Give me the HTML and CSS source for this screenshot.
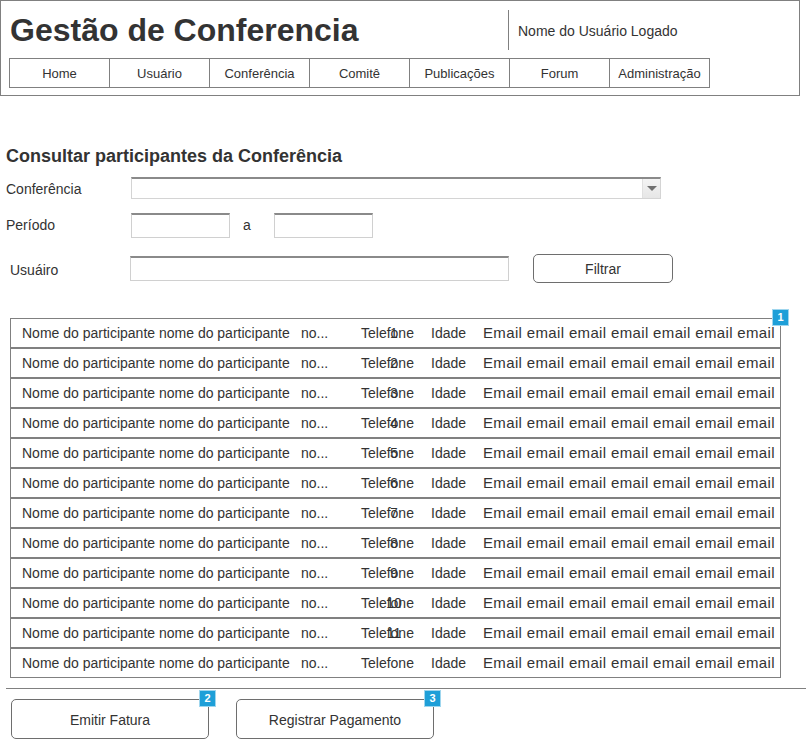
FILE: index.html
```html
<!DOCTYPE html>
<html lang="pt">
<head>
<meta charset="utf-8">
<title>Gestão de Conferencia</title>
<link rel="stylesheet" href="styles.css">
</head>
<body>
<div class="header">
  <div class="top-row">
    <div class="title">Gestão de Conferencia</div>
    <div class="user">Nome do Usuário Logado</div>
  </div>
  <div class="nav">
    <div class="nav-item">Home</div>
    <div class="nav-item">Usuário</div>
    <div class="nav-item">Conferência</div>
    <div class="nav-item">Comitê</div>
    <div class="nav-item">Publicações</div>
    <div class="nav-item">Forum</div>
    <div class="nav-item">Administração</div>
  </div>
</div>

<div class="main">
  <h1 class="heading">Consultar participantes da Conferência</h1>

  <div class="form-row row-conf">
    <div class="label label-conf">Conferência</div>
    <div class="select"><div class="select-btn"><span class="tri"></span></div></div>
  </div>

  <div class="form-row row-period">
    <div class="label label-period">Período</div>
    <div class="input short"></div>
    <div class="sep">a</div>
    <div class="input short"></div>
  </div>

  <div class="form-row row-user">
    <div class="label label-user">Usuáiro</div>
    <div class="input long"></div>
    <div class="btn filter">Filtrar</div>
  </div>

  <div class="table">
    <div class="badge badge-table">1</div>
    <div class="row"><span class="c-name">Nome do participante nome do participante</span><span class="c-more">no...</span><span class="c-phone">Telefone<span class="num">1</span></span><span class="c-age">Idade</span><span class="c-mail">Email email email email email email email</span></div>
    <div class="row"><span class="c-name">Nome do participante nome do participante</span><span class="c-more">no...</span><span class="c-phone">Telefone<span class="num">2</span></span><span class="c-age">Idade</span><span class="c-mail">Email email email email email email email</span></div>
    <div class="row"><span class="c-name">Nome do participante nome do participante</span><span class="c-more">no...</span><span class="c-phone">Telefone<span class="num">3</span></span><span class="c-age">Idade</span><span class="c-mail">Email email email email email email email</span></div>
    <div class="row"><span class="c-name">Nome do participante nome do participante</span><span class="c-more">no...</span><span class="c-phone">Telefone<span class="num">4</span></span><span class="c-age">Idade</span><span class="c-mail">Email email email email email email email</span></div>
    <div class="row"><span class="c-name">Nome do participante nome do participante</span><span class="c-more">no...</span><span class="c-phone">Telefone<span class="num">5</span></span><span class="c-age">Idade</span><span class="c-mail">Email email email email email email email</span></div>
    <div class="row"><span class="c-name">Nome do participante nome do participante</span><span class="c-more">no...</span><span class="c-phone">Telefone<span class="num">6</span></span><span class="c-age">Idade</span><span class="c-mail">Email email email email email email email</span></div>
    <div class="row"><span class="c-name">Nome do participante nome do participante</span><span class="c-more">no...</span><span class="c-phone">Telefone<span class="num">7</span></span><span class="c-age">Idade</span><span class="c-mail">Email email email email email email email</span></div>
    <div class="row"><span class="c-name">Nome do participante nome do participante</span><span class="c-more">no...</span><span class="c-phone">Telefone<span class="num">8</span></span><span class="c-age">Idade</span><span class="c-mail">Email email email email email email email</span></div>
    <div class="row"><span class="c-name">Nome do participante nome do participante</span><span class="c-more">no...</span><span class="c-phone">Telefone<span class="num">9</span></span><span class="c-age">Idade</span><span class="c-mail">Email email email email email email email</span></div>
    <div class="row"><span class="c-name">Nome do participante nome do participante</span><span class="c-more">no...</span><span class="c-phone">Telefone<span class="num">10</span></span><span class="c-age">Idade</span><span class="c-mail">Email email email email email email email</span></div>
    <div class="row"><span class="c-name">Nome do participante nome do participante</span><span class="c-more">no...</span><span class="c-phone">Telefone<span class="num">11</span></span><span class="c-age">Idade</span><span class="c-mail">Email email email email email email email</span></div>
    <div class="row"><span class="c-name">Nome do participante nome do participante</span><span class="c-more">no...</span><span class="c-phone">Telefone</span><span class="c-age">Idade</span><span class="c-mail">Email email email email email email email</span></div>
  </div>

  <div class="divider"></div>

  <div class="actions">
    <div class="btn action">Emitir Fatura<span class="badge badge-btn">2</span></div>
    <div class="btn action">Registrar Pagamento<span class="badge badge-btn">3</span></div>
  </div>
</div>
</body>
</html>
```

FILE: styles.css
```css
* { box-sizing: border-box; }

body {
  margin: 0;
  font-family: "Liberation Sans", Arial, sans-serif;
  color: #333333;
  background: #ffffff;
}

.header {
  width: 800px;
  height: 96px;
  border: 1px solid #808080;
  padding: 0 8px;
}

.top-row {
  display: flex;
  height: 40px;
  margin-top: 9px;
}

.title {
  flex: 0 0 499px;
  padding-left: 1px;
  font-size: 32px;
  font-weight: bold;
  line-height: 40px;
  color: #333333;
}

.user {
  border-left: 1px solid #808080;
  padding: 1px 0 0 9px;
  font-size: 14px;
  line-height: 40px;
}

.nav {
  display: flex;
  margin-top: 8px;
}

.nav-item {
  width: 101px;
  height: 30px;
  border: 1px solid #808080;
  margin-left: -1px;
  font-size: 13px;
  line-height: 30px;
  text-align: center;
}

.nav-item:first-child { margin-left: 0; }

.main {
  padding-left: 6px;
}

.heading {
  margin: 49px 0 0 0;
  font-size: 18px;
  line-height: 22px;
  font-weight: bold;
  color: #333333;
}

.form-row {
  display: flex;
  align-items: center;
  font-size: 14px;
}

.row-conf { margin-top: 10px; height: 22px; }
.row-period { margin-top: 14px; height: 25px; }
.row-user { margin-top: 16px; height: 29px; }

.label { width: 125px; }
.label-conf { padding-top: 2px; }
.label-period { padding-bottom: 2px; }
.label-user { width: 124px; padding: 3px 0 0 4px; }

.select {
  position: relative;
  width: 530px;
  height: 22px;
  border: 1px solid #d4d4d4;
  border-top: 2px solid #8a8a8a;
  background: #ffffff;
}

.select-btn {
  position: absolute;
  right: 0;
  top: 0;
  width: 18px;
  height: 19px;
  background: linear-gradient(#f4f4f4, #e6e6e6);
  border-left: 1px solid #e0e0e0;
  display: flex;
  align-items: center;
  justify-content: center;
}

.tri {
  width: 0;
  height: 0;
  border-left: 5px solid transparent;
  border-right: 5px solid transparent;
  border-top: 5px solid #707070;
}

.input {
  height: 25px;
  border: 1px solid #d0d0d0;
  border-top: 2px solid #8a8a8a;
  background: #ffffff;
}

.short { width: 99px; }
.long { width: 379px; }

.sep {
  width: 44px;
  padding: 0 0 1px 13px;
}

.btn {
  border: 1px solid #6e6e6e;
  border-radius: 5px;
  text-align: center;
  font-size: 14px;
  background: #ffffff;
}

.filter {
  margin-left: 24px;
  width: 140px;
  height: 29px;
  line-height: 29px;
}

.table {
  position: relative;
  margin: 35px 0 0 4px;
  width: 771px;
}

.row {
  position: relative;
  display: flex;
  height: 30px;
  border: 1px solid #808080;
  font-size: 14px;
  line-height: 28px;
  white-space: nowrap;
  overflow: hidden;
  padding-left: 11px;
}

.c-name { width: 279px; }
.c-more { width: 60px; }
.c-phone { width: 70px; position: relative; }
.c-age { width: 52px; }
.c-mail { flex: 1; overflow: hidden; font-size: 15px; letter-spacing: 0.35px; }

.num {
  position: absolute;
  left: 23px;
  width: 20px;
  text-align: center;
  top: 0;
}

.badge {
  position: absolute;
  width: 17px;
  height: 17px;
  background: #1e9fd8;
  border: 1px solid #9fd6ee;
  color: #ffffff;
  font-size: 11px;
  font-weight: bold;
  line-height: 15px;
  text-align: center;
  letter-spacing: 0;
}

.badge-table { right: -8px; top: -9px; z-index: 2; }

.divider {
  margin-top: 10px;
  height: 1px;
  background: #808080;
}

.actions {
  display: flex;
  gap: 27px;
  margin: 10px 0 0 5px;
}

.action {
  position: relative;
  width: 198px;
  height: 40px;
  line-height: 40px;
}

.badge-btn { right: -8px; top: -10px; line-height: 15px; }
```
